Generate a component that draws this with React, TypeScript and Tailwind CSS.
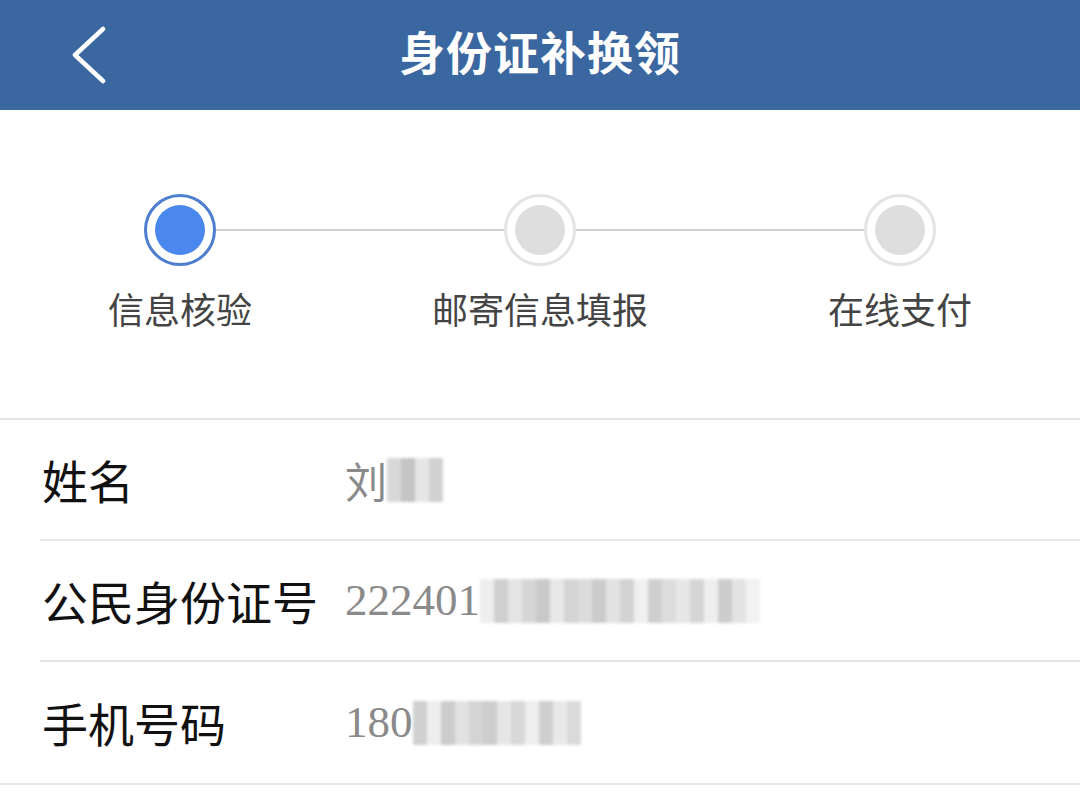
const STEPS = ['信息核验', '邮寄信息填报', '在线支付']

// 打码色块（模拟马赛克）
function Mosaic({ shades }: { shades: string[] }) {
  return (
    <span className="inline-flex h-[44px] items-stretch blur-[1.5px]">
      {shades.map((c, i) => (
        <span key={i} className="w-[14px]" style={{ backgroundColor: c }} />
      ))}
    </span>
  )
}

function Row({ label, value, shades, serif, last }: { label: string; value: string; shades: string[]; serif?: boolean; last?: boolean }) {
  return (
    <div className={last ? 'border-b-2 border-[#e6e6e6]' : ''}>
      <div className={'ml-[40px] flex h-[121px] items-center ' + (last ? '' : 'border-b-2 border-[#e6e6e6]')}>
        <div className="w-[305px] shrink-0 pl-[2px] text-[46px] text-[#111]">{label}</div>
        <div className="flex items-center">
          <span
            className={
              'text-[#8a8a8a] ' +
              (serif ? "font-['Liberation_Serif','Noto_Sans_CJK_SC',serif] text-[45px]" : 'text-[42px]')
            }
          >
            {value}
          </span>
          <Mosaic shades={shades} />
        </div>
      </div>
    </div>
  )
}

export default function App() {
  return (
    <div className="h-[810px] w-[1080px] overflow-hidden bg-white font-['Noto_Sans_CJK_SC',sans-serif]">
      {/* 顶栏 */}
      <div className="flex h-[110px] items-center bg-[#3b67a0] pl-[70px] pr-[70px]">
        <svg width="38" height="58" viewBox="0 0 38 58" className="shrink-0">
          <polyline points="33,3 5,29 33,55" fill="none" stroke="#fff" strokeWidth="4.5" strokeLinecap="round" strokeLinejoin="round" />
        </svg>
        <h1 className="-mt-[10px] flex-1 pr-[38px] text-center text-[46px] font-bold tracking-[1px] text-white">身份证补换领</h1>
      </div>

      {/* 步骤条 */}
      <div className="grid grid-cols-3 border-b-2 border-[#e6e6e6] pt-[84px] pb-[90px]">
        {STEPS.map((s, i) => (
          <div key={s} className="flex flex-col items-center">
            <div className="flex w-full items-center">
              <div className={'h-[2px] flex-1 ' + (i === 0 ? '' : 'bg-[#cfcfcf]')} />
              {i === 0 ? (
                <div className="flex h-[72px] w-[72px] items-center justify-center rounded-full border-[3px] border-[#4d7ed0]">
                  <div className="h-[50px] w-[50px] rounded-full bg-[#4a88ee]" />
                </div>
              ) : (
                <div className="flex h-[72px] w-[72px] items-center justify-center rounded-full border-[3px] border-[#e4e4e4]">
                  <div className="h-[50px] w-[50px] rounded-full bg-[#dedede]" />
                </div>
              )}
              <div className={'h-[2px] flex-1 ' + (i === 2 ? '' : 'bg-[#cfcfcf]')} />
            </div>
            <div className="mt-[22px] text-[36px] leading-[40px] text-[#444]">{s}</div>
          </div>
        ))}
      </div>

      {/* 信息列表 */}
      <Row label="姓名" value="刘" shades={['#d9d9d9', '#c4c4c4', '#e6e6e6', '#d2d2d2']} />
      <Row
        label="公民身份证号"
        value="222401"
        serif
        shades={['#eeeeee', '#cfcfcf', '#e4e4e4', '#d6d6d6', '#c9c9c9', '#e8e8e8', '#d4d4d4', '#dcdcdc', '#cccccc', '#e2e2e2', '#d3d3d3', '#f0f0f0', '#cfcfcf', '#dddddd', '#e7e7e7', '#d5d5d5', '#eeeeee', '#cdcdcd', '#e3e3e3', '#f2f2f2']}
      />
      <Row
        label="手机号码"
        value="180"
        serif
        shades={['#d0d0d0', '#eeeeee', '#cccccc', '#e2e2e2', '#d4d4d4', '#cdcdcd', '#e6e6e6', '#d8d8d8', '#eeeeee', '#cfcfcf', '#e9e9e9', '#dadada']}
        last
      />
    </div>
  )
}
